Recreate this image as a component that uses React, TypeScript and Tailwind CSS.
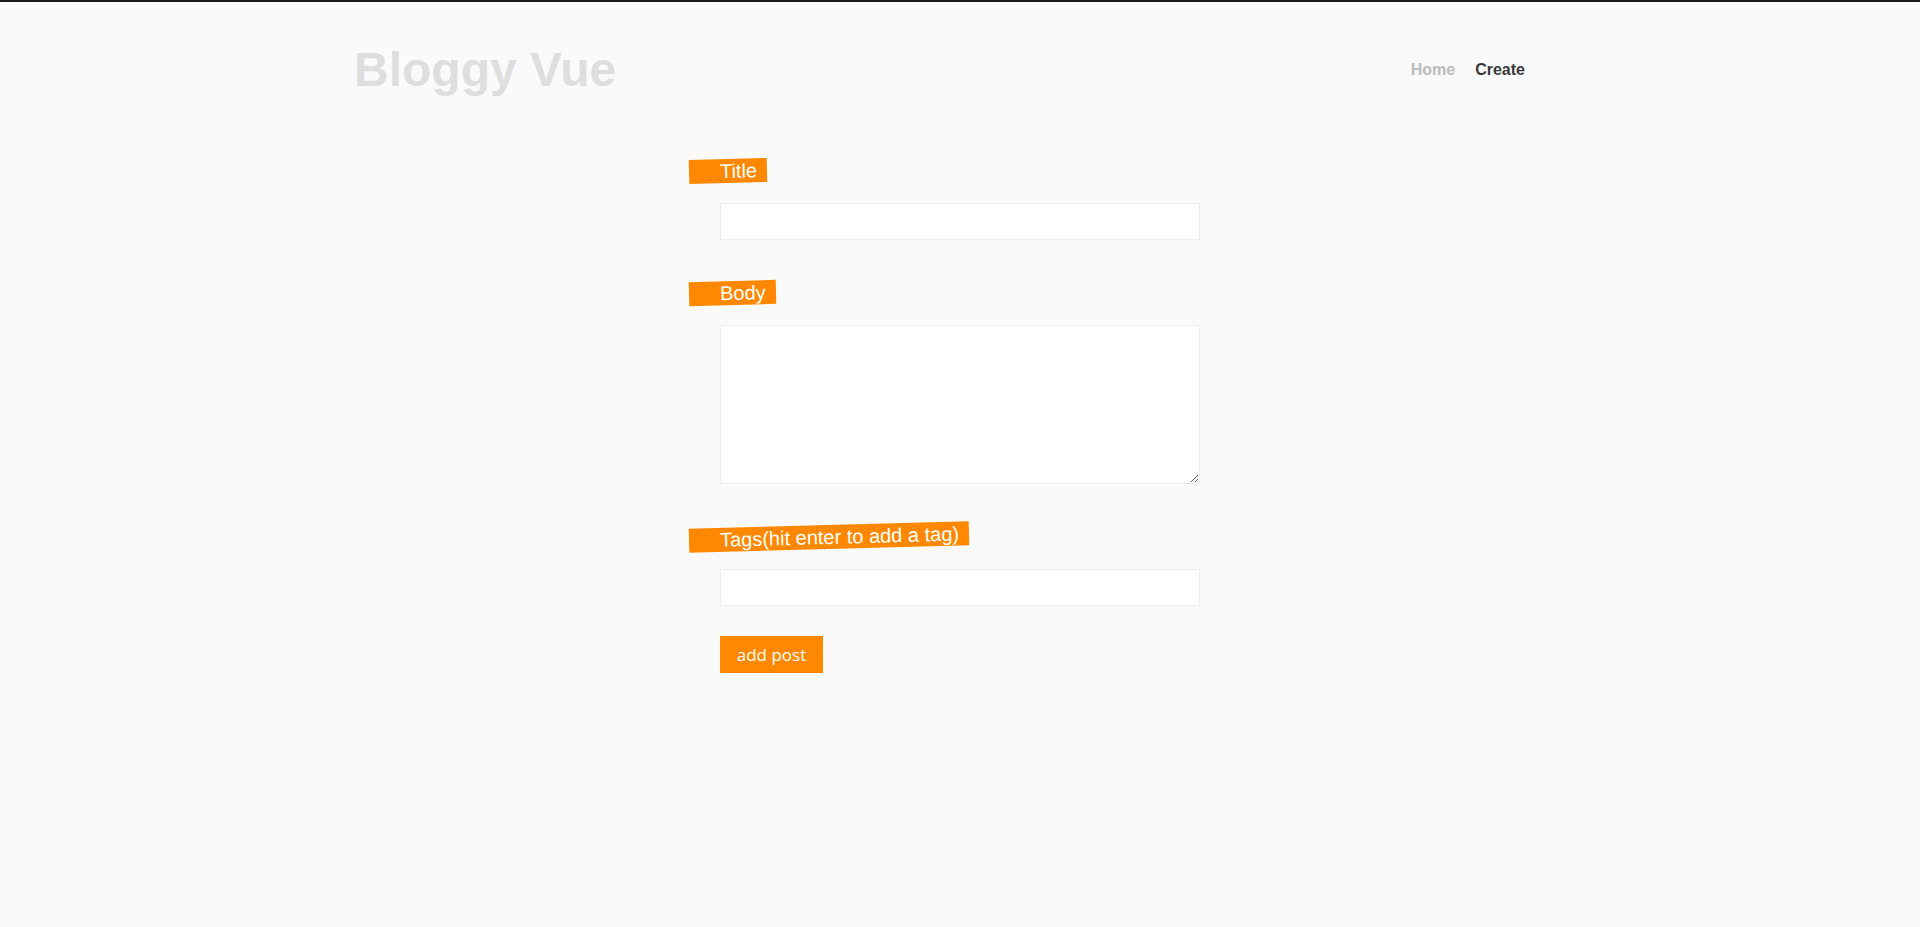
import React from "react";

const Label = ({ text }: { text: string }) => (
  <div className="flex">
    <label
      className="ml-[-31px] inline-block -rotate-[1.5deg] bg-[#ff8800] pl-[31px] pr-[10px] text-[20px] leading-[24px] text-white"
      style={{ fontFamily: '"Liberation Sans", Arial, sans-serif' }}
    >
      {text}
    </label>
  </div>
);

export default function App() {
  return (
    <div className="min-h-[927px] border-t-2 border-[#1c1c1c] bg-[#fafafa]" style={{ fontFamily: '"Liberation Sans", Arial, sans-serif' }}>
      <header className="mx-auto flex h-[97px] w-[1200px] items-start justify-between">
        <h1 className="ml-[-6px] mt-[40px] text-[48px] font-bold leading-[55px] text-[#dedede]">
          Bloggy Vue
        </h1>
        <nav className="mr-[35px] mt-[59px] flex gap-[20px] text-[16px] font-bold leading-[18px]">
          <a className="text-[#bbbbbb]">Home</a>
          <a className="text-[#3a3a3a]">Create</a>
        </nav>
      </header>
      <form className="mx-auto mt-[60px] flex w-[480px] flex-col">
        <Label text="Title" />
        <input className="mt-[20px] h-[37px] w-full border border-[#eeeeee] bg-white outline-none" />
        <div className="mt-[41px]">
          <Label text="Body" />
        </div>
        <textarea className="mt-[20px] block h-[159px] w-full border border-[#eeeeee] bg-white outline-none" />
        <div className="mt-[41px]">
          <Label text="Tags(hit enter to add a tag)" />
        </div>
        <input className="mt-[20px] h-[37px] w-full border border-[#eeeeee] bg-white outline-none" />
        <div className="mt-[30px]">
          <button
            type="button"
            className="h-[37px] w-[103px] bg-[#ff8800] text-[17px] leading-[37px] text-white"
            style={{ fontFamily: '"Open Sans", sans-serif' }}
          >
            add post
          </button>
        </div>
      </form>
    </div>
  );
}
